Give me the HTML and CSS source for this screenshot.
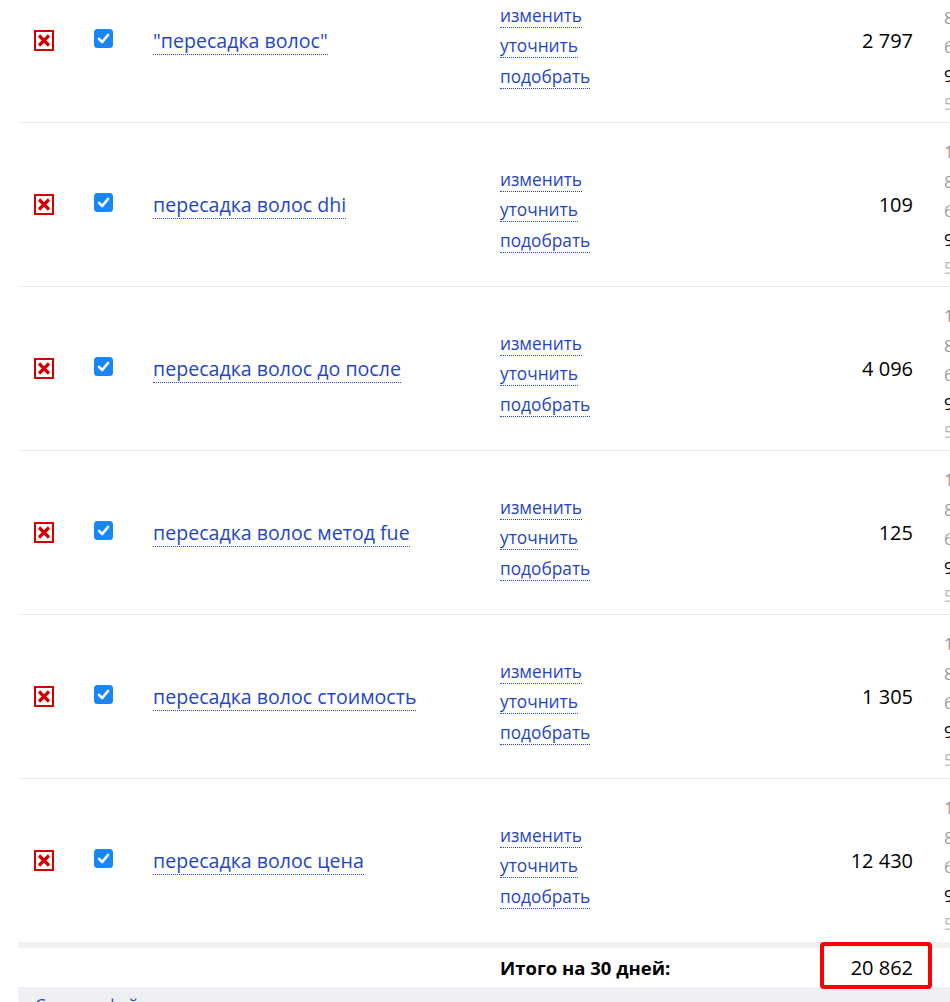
FILE: index.html
```html
<!DOCTYPE html>
<html lang="ru">
<head>
<meta charset="utf-8">
<title>Wordstat</title>
<link rel="stylesheet" href="styles.css">
</head>
<body>
<div class="page">
  <div class="table">
    <div class="row">
      <div class="c-del"><span class="del"><svg viewBox="0 0 20 21" width="20" height="21"><rect x="1" y="1" width="18" height="19" fill="#fff" stroke="#d40000" stroke-width="2"/><path d="M5 5.5 L15 15.5 M15 5.5 L5 15.5" stroke="#d40000" stroke-width="3.2"/></svg></span></div>
      <div class="c-chk"><span class="chk"><svg viewBox="0 0 19 19" width="19" height="19"><rect width="19" height="19" rx="3.5" fill="#1a86f4"/><path d="M5 9.8 L8.2 13 L14 6" fill="none" stroke="#fff" stroke-width="2.6" stroke-linecap="round" stroke-linejoin="round"/></svg></span></div>
      <div class="c-kw"><a class="kw">"пересадка волос"</a></div>
      <div class="c-act"><a>изменить</a><a>уточнить</a><a>подобрать</a></div>
      <div class="c-num">2 797</div>
      <div class="c-more"><span class="g">1 %</span><span class="g">8 %</span><span class="g">6 %</span><span class="b">9 %</span><span class="l">5 %</span></div>
    </div>
    <div class="row">
      <div class="c-del"><span class="del"><svg viewBox="0 0 20 21" width="20" height="21"><rect x="1" y="1" width="18" height="19" fill="#fff" stroke="#d40000" stroke-width="2"/><path d="M5 5.5 L15 15.5 M15 5.5 L5 15.5" stroke="#d40000" stroke-width="3.2"/></svg></span></div>
      <div class="c-chk"><span class="chk"><svg viewBox="0 0 19 19" width="19" height="19"><rect width="19" height="19" rx="3.5" fill="#1a86f4"/><path d="M5 9.8 L8.2 13 L14 6" fill="none" stroke="#fff" stroke-width="2.6" stroke-linecap="round" stroke-linejoin="round"/></svg></span></div>
      <div class="c-kw"><a class="kw">пересадка волос dhi</a></div>
      <div class="c-act"><a>изменить</a><a>уточнить</a><a>подобрать</a></div>
      <div class="c-num">109</div>
      <div class="c-more"><span class="g">1 %</span><span class="g">8 %</span><span class="g">6 %</span><span class="b">9 %</span><span class="l">5 %</span></div>
    </div>
    <div class="row">
      <div class="c-del"><span class="del"><svg viewBox="0 0 20 21" width="20" height="21"><rect x="1" y="1" width="18" height="19" fill="#fff" stroke="#d40000" stroke-width="2"/><path d="M5 5.5 L15 15.5 M15 5.5 L5 15.5" stroke="#d40000" stroke-width="3.2"/></svg></span></div>
      <div class="c-chk"><span class="chk"><svg viewBox="0 0 19 19" width="19" height="19"><rect width="19" height="19" rx="3.5" fill="#1a86f4"/><path d="M5 9.8 L8.2 13 L14 6" fill="none" stroke="#fff" stroke-width="2.6" stroke-linecap="round" stroke-linejoin="round"/></svg></span></div>
      <div class="c-kw"><a class="kw">пересадка волос до после</a></div>
      <div class="c-act"><a>изменить</a><a>уточнить</a><a>подобрать</a></div>
      <div class="c-num">4 096</div>
      <div class="c-more"><span class="g">1 %</span><span class="g">8 %</span><span class="g">6 %</span><span class="b">9 %</span><span class="l">5 %</span></div>
    </div>
    <div class="row">
      <div class="c-del"><span class="del"><svg viewBox="0 0 20 21" width="20" height="21"><rect x="1" y="1" width="18" height="19" fill="#fff" stroke="#d40000" stroke-width="2"/><path d="M5 5.5 L15 15.5 M15 5.5 L5 15.5" stroke="#d40000" stroke-width="3.2"/></svg></span></div>
      <div class="c-chk"><span class="chk"><svg viewBox="0 0 19 19" width="19" height="19"><rect width="19" height="19" rx="3.5" fill="#1a86f4"/><path d="M5 9.8 L8.2 13 L14 6" fill="none" stroke="#fff" stroke-width="2.6" stroke-linecap="round" stroke-linejoin="round"/></svg></span></div>
      <div class="c-kw"><a class="kw">пересадка волос метод fue</a></div>
      <div class="c-act"><a>изменить</a><a>уточнить</a><a>подобрать</a></div>
      <div class="c-num">125</div>
      <div class="c-more"><span class="g">1 %</span><span class="g">8 %</span><span class="g">6 %</span><span class="b">9 %</span><span class="l">5 %</span></div>
    </div>
    <div class="row">
      <div class="c-del"><span class="del"><svg viewBox="0 0 20 21" width="20" height="21"><rect x="1" y="1" width="18" height="19" fill="#fff" stroke="#d40000" stroke-width="2"/><path d="M5 5.5 L15 15.5 M15 5.5 L5 15.5" stroke="#d40000" stroke-width="3.2"/></svg></span></div>
      <div class="c-chk"><span class="chk"><svg viewBox="0 0 19 19" width="19" height="19"><rect width="19" height="19" rx="3.5" fill="#1a86f4"/><path d="M5 9.8 L8.2 13 L14 6" fill="none" stroke="#fff" stroke-width="2.6" stroke-linecap="round" stroke-linejoin="round"/></svg></span></div>
      <div class="c-kw"><a class="kw">пересадка волос стоимость</a></div>
      <div class="c-act"><a>изменить</a><a>уточнить</a><a>подобрать</a></div>
      <div class="c-num">1 305</div>
      <div class="c-more"><span class="g">1 %</span><span class="g">8 %</span><span class="g">6 %</span><span class="b">9 %</span><span class="l">5 %</span></div>
    </div>
    <div class="row last">
      <div class="c-del"><span class="del"><svg viewBox="0 0 20 21" width="20" height="21"><rect x="1" y="1" width="18" height="19" fill="#fff" stroke="#d40000" stroke-width="2"/><path d="M5 5.5 L15 15.5 M15 5.5 L5 15.5" stroke="#d40000" stroke-width="3.2"/></svg></span></div>
      <div class="c-chk"><span class="chk"><svg viewBox="0 0 19 19" width="19" height="19"><rect width="19" height="19" rx="3.5" fill="#1a86f4"/><path d="M5 9.8 L8.2 13 L14 6" fill="none" stroke="#fff" stroke-width="2.6" stroke-linecap="round" stroke-linejoin="round"/></svg></span></div>
      <div class="c-kw"><a class="kw">пересадка волос цена</a></div>
      <div class="c-act"><a>изменить</a><a>уточнить</a><a>подобрать</a></div>
      <div class="c-num">12 430</div>
      <div class="c-more"><span class="g">1 %</span><span class="g">8 %</span><span class="g">6 %</span><span class="b">9 %</span><span class="l">5 %</span></div>
    </div>
    <div class="total">
      <div class="t-label">Итого на 30 дней:</div>
      <div class="t-num">20 862<span class="mark"></span></div>
    </div>
    <div class="footer">
      <a class="dl">Скачать файл</a><span class="tri">▸</span>
    </div>
  </div>
</div>
</body>
</html>
```

FILE: styles.css
```css
html, body {
  margin: 0;
  padding: 0;
  background: #fff;
  overflow: hidden;
}
body {
  font-family: "Open Sans", "Liberation Sans", Arial, sans-serif;
  color: #000;
}
.page {
  width: 950px;
  height: 1002px;
  overflow: hidden;
}
.table {
  margin-top: -41px;
  margin-left: 18px;
  width: 1000px;
}
.row {
  display: flex;
  align-items: center;
  height: 163px;
  border-bottom: 1px solid #ebebf0;
}
.row.last {
  border-bottom: 6px solid #f0f0f5;
}
.c-del {
  width: 60px;
  padding-left: 16px;
  box-sizing: border-box;
  display: flex;
}
.del, .chk { display: block; line-height: 0; }
.del svg, .chk svg { display: block; }
.c-chk {
  width: 60px;
  padding-left: 16px;
  box-sizing: border-box;
  display: flex;
  margin-top: -5px;
}
.c-kw {
  width: 347px;
  padding-left: 15px;
  box-sizing: border-box;
  font-size: 19.6px;
}
.kw, .c-act a, .dl {
  color: #1f45c8;
  text-decoration: none;
  border-bottom: 1px dotted #1f45c8;
}
.c-act {
  width: 315px;
  padding-left: 15px;
  box-sizing: border-box;
  display: flex;
  flex-direction: column;
  align-items: flex-start;
  margin-top: 12px;
  font-size: 17.3px;
}
.c-act a {
  line-height: 22px;
  margin: 3.75px 0;
}
.c-num {
  width: 113px;
  text-align: right;
  font-size: 20px;
}
.c-more {
  padding-left: 31px;
  display: flex;
  flex-direction: column;
  font-size: 17px;
  line-height: 29.25px;
  margin-top: 12px;
  white-space: nowrap;
}
.c-more .g { color: #9a9a9a; }
.c-more .b { color: #000; }
.c-more .l { color: #b5b5b5; font-size: 16px; }
.total {
  display: flex;
  align-items: center;
  height: 39px;
}
.t-label {
  margin-left: 482px;
  width: 300px;
  font-weight: bold;
  font-size: 18.5px;
}
.t-num {
  position: relative;
  width: 113px;
  text-align: right;
  font-size: 20px;
}
.mark {
  position: absolute;
  left: 20px;
  top: -12px;
  width: 112px;
  height: 47px;
  box-sizing: border-box;
  border: 4px solid #ff0000;
  border-radius: 4px;
}
.footer {
  background: #eeeff2;
  height: 40px;
  padding-left: 17px;
  padding-top: 6px;
  box-sizing: border-box;
  font-size: 17px;
}
.tri {
  margin-left: 12px;
  font-size: 14px;
  color: #000;
}
```
